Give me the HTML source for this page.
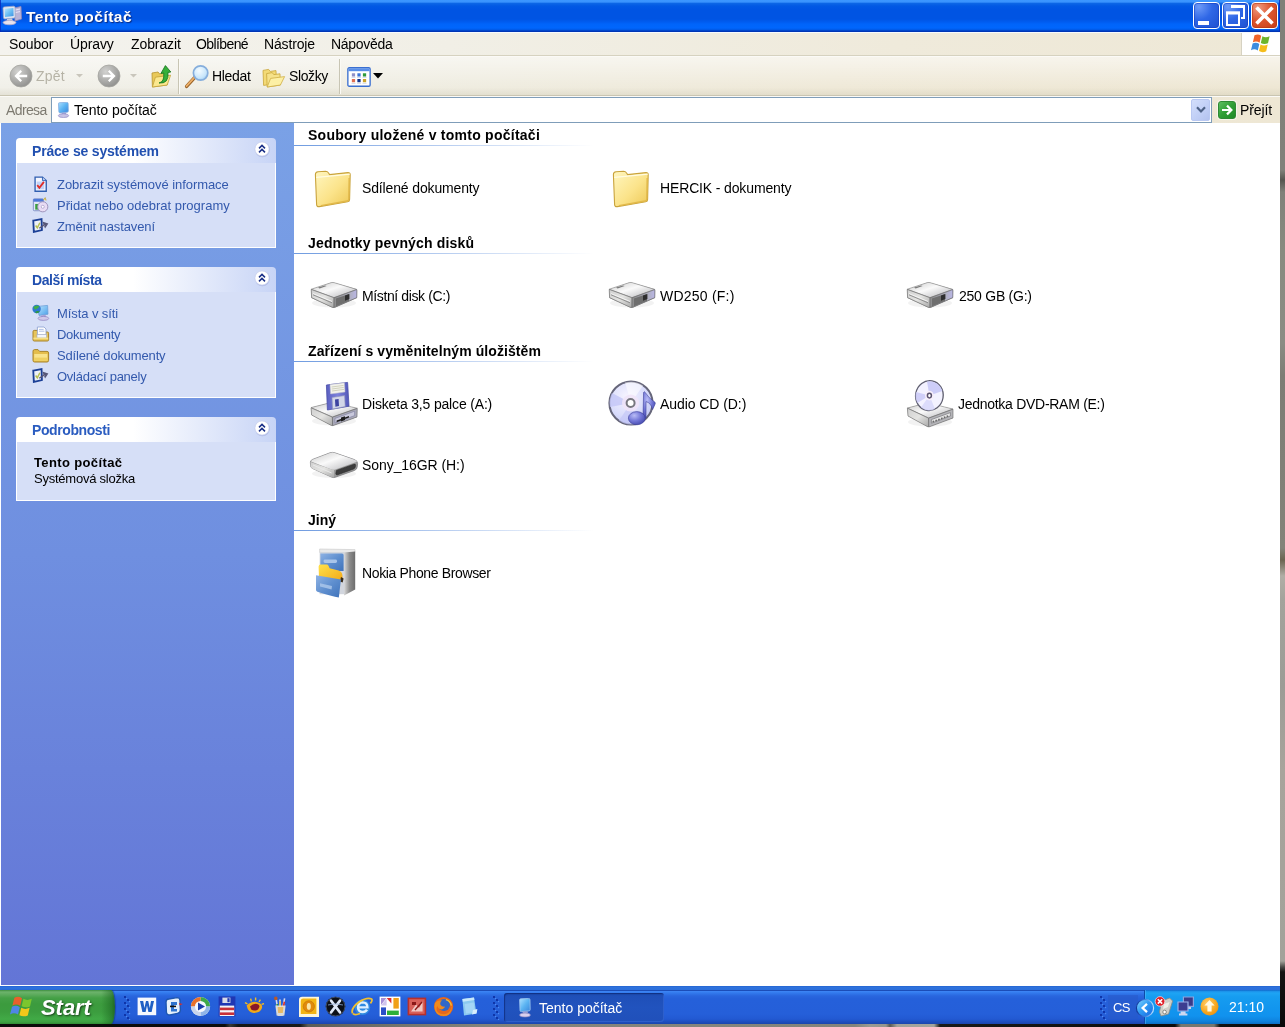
<!DOCTYPE html>
<html lang="cs">
<head>
<meta charset="utf-8">
<title>Tento počítač</title>
<style>
*{box-sizing:border-box;margin:0;padding:0}
html,body{width:1285px;height:1027px;overflow:hidden}
body{font-family:"Liberation Sans",sans-serif;font-size:13px;color:#000;background:#17150f;position:relative}
.abs{position:absolute}
.t{position:absolute;white-space:nowrap;line-height:1}
#screen{will-change:transform}
#rstrip{position:absolute;left:1280px;top:0;width:5px;height:1027px;background:linear-gradient(180deg,#7f8078 0,#80817a 170px,#55554f 180px,#80817a 192px,#888b80 250px,#8b8c84 343px,#7d7d75 376px,#838379 548px,#6a6450 560px,#b0aea6 576px,#a3a39c 600px,#9c9c96 686px,#a8a49c 770px,#a2a29a 961px,#4a4a46 967px,#141412 972px,#0a0a0a 1027px)}
#bstrip{position:absolute;left:0;top:1024px;width:1285px;height:3px;background:linear-gradient(90deg,#0b0b0a 0,#0d0d0b 225px,#3a3a36 230px,#161614 238px,#1a1a18 300px,#5c5c56 308px,#74746c 400px,#828279 480px,#85857c 700px,#84847b 855px,#9a9a92 870px,#95958d 886px,#5a5a54 890px,#a2a29a 897px,#a4a49c 934px,#1a1a18 940px,#0c0c0b 1175px,#77776f 1181px,#77776f 1214px,#111110 1220px,#0a0a0a 1285px)}
#screen{position:absolute;left:0;top:0;width:1280px;height:1024px;background:#fff;overflow:hidden}

/* title bar */
#title{position:absolute;left:0;top:0;width:1280px;height:32px;background:linear-gradient(180deg,#3c97ff 0,#3a93fd 2px,#0c66e6 3.5px,#0259e4 6px,#0054e3 10px,#0054e3 19px,#005cf0 22px,#0064fa 24px,#0066fd 28px,#005bea 29.5px,#0046cc 30.5px,#0035b5 31px,#0035b5 32px);box-shadow:inset 1px 0 0 rgba(8,40,190,.8),inset -1px 0 0 rgba(8,40,190,.8)}
#title .cap{left:26px;top:9px;font-size:15.5px;font-weight:bold;color:#fff;text-shadow:1px 1px 1px #0a2a80;letter-spacing:.5px}
.wb{position:absolute;top:2px;width:27px;height:27px;border:1px solid #fff;border-radius:4px;background:radial-gradient(circle at 20% 15%,#6d9af7 0,#2f67e6 45%,#1d50d0 100%);box-shadow:inset 0 0 0 1px rgba(20,60,190,.55)}
#bclose{background:radial-gradient(circle at 25% 20%,#ef9a80 0,#de5730 45%,#c53c16 100%);box-shadow:inset 0 0 0 1px rgba(170,50,20,.5)}
.wb svg{position:absolute;left:-1px;top:-1px}

/* menu */
#menu{position:absolute;left:0;top:32px;width:1280px;height:24px;background:linear-gradient(90deg,#f4f3ee 0,#f1efe6 35%,#efeadb 70%,#eee8d6 100%);border-top:1px solid #f6faff;border-bottom:1px solid #d6d2c0}
#menu .t{top:4px;font-size:14px}
#logo{position:absolute;left:1241px;top:0;width:39px;height:22px;background:#fff;border-left:1px solid #d6d2c2}
#tool{position:absolute;left:0;top:56px;width:1280px;height:40px;background:linear-gradient(180deg,rgba(255,255,255,.55) 0,rgba(255,255,255,.2) 50%,rgba(255,255,255,0) 80%,rgba(190,185,160,.25) 100%),linear-gradient(90deg,#f1f0e9 0,#efede2 30%,#efe9d8 65%,#eee7d4 100%);border-top:1px solid #fbfaf6;border-bottom:1px solid #c9c5b2}
#tool .t{font-size:14px;top:12px}
.sep{position:absolute;top:2px;width:2px;height:35px;border-left:1px solid #c8c5b4;border-right:1px solid #fbfaf5}
#addr{position:absolute;left:0;top:96px;width:1280px;height:27px;background:linear-gradient(90deg,#f1f0e9 0,#efede2 30%,#efe9d8 65%,#eee7d4 100%);border-top:1px solid #fbfaf6}
#addr .t{font-size:14px}
#abox{position:absolute;left:51px;top:0;width:1161px;height:26px;background:#fff;border:1px solid #7f9db9}
#adrop{position:absolute;left:1139px;top:1px;width:19px;height:22px;border-radius:2px;background:linear-gradient(135deg,#d3defa 0,#c3d1f7 50%,#b3c2ee 100%);border:1px solid #b9c8f2}
#go{position:absolute;left:1218px;top:4px;width:18px;height:18px;border-radius:3px;background:linear-gradient(135deg,#5fbf62 0,#2f9e35 50%,#1f8a28 100%);border:1px solid #2f8a35;box-shadow:0 0 0 1px rgba(255,255,255,.55)}

/* left pane */
#left{position:absolute;left:1px;top:123px;width:293px;height:862px;background:linear-gradient(180deg,#7aa1e6 0,#6f8fe0 50%,#6375d6 100%)}
.ph{position:absolute;left:15px;width:260px;height:25px;border-radius:4px 4px 0 0;background:linear-gradient(90deg,#fff 0,#fff 45%,#c7d4f6 100%)}
.ph .t{left:16px;top:6px;font-size:14px;font-weight:bold;color:#215dc6;letter-spacing:-.25px}
.chev{position:absolute;left:236px;top:1px}
.pb{position:absolute;left:15px;width:260px;background:#d6dff7;border:1px solid #fff;border-top:0}
.lnk{position:absolute;left:56px;font-size:13px;color:#3359ad;white-space:nowrap;line-height:1}
.ico{position:absolute;left:30px}

/* content */
#main{position:absolute;left:294px;top:123px;width:986px;height:863px;background:#fff}
.sh{position:absolute;left:14px;font-size:14px;font-weight:bold;white-space:nowrap;line-height:1}
.hl{position:absolute;left:0;width:300px;height:1px;background:linear-gradient(90deg,#6f9be0 0,#b7cdf0 50%,#fff 100%)}
.it{position:absolute;font-size:14px;white-space:nowrap;line-height:1}

/* taskbar */
#task{position:absolute;left:0;top:986px;width:1280px;height:38px;background:linear-gradient(180deg,#2260cc 0,#2d72dd 1px,#2c6fdb 3.5px,#1b4db8 4px,#1b4db8 5px,#3b83f3 5.5px,#3279ec 7px,#2966de 10px,#2560da 13px,#255fd9 28px,#2259d2 33px,#1d4dbd 36px,#1a45ad 38px)}
#start{position:absolute;left:0;top:4px;width:115px;height:34px;border-radius:0 4px 4px 0/0 17px 17px 0;background:linear-gradient(90deg,rgba(0,0,0,0) 0,rgba(0,0,0,0) 88%,rgba(20,90,25,.45) 97%,rgba(15,70,20,.6) 100%),linear-gradient(180deg,#3f8f3f 0,#6db36c 2px,#5aaa5a 5px,#44a046 8px,#3c9b3e 14px,#3c9d3f 22px,#41aa46 29px,#3da142 32px,#2f8a34 34px);box-shadow:1px 0 1px rgba(10,40,120,.45)}
#start .t{left:41px;top:7px;font-size:22px;font-weight:bold;font-style:italic;color:#fff;letter-spacing:-.05px;text-shadow:1px 1px 2px rgba(20,50,20,.85)}
.grip{position:absolute;top:10px;width:7px;height:24px}
.ql{position:absolute;top:10px}
#tbtn{position:absolute;left:504px;top:7px;width:160px;height:29px;border-radius:3px;background:linear-gradient(180deg,#1a47a8 0,#1f4fb8 3px,#2153be 50%,#2050ba 100%);box-shadow:inset 1px 1px 1px rgba(10,30,100,.6),inset -1px -1px 0 rgba(60,110,220,.5)}
#tbtn .t{left:35px;top:8px;font-size:14px;color:#fff}
#tray{position:absolute;left:1144px;top:4px;width:136px;height:34px;background:linear-gradient(180deg,#0e5fc4 0,#1b8ee8 1px,#1ea4f4 3px,#169cf0 7px,#1296ee 18px,#1192ee 26px,#0f83de 31px,#0c6fc4 34px);border-left:1px solid #0d4aa8;box-shadow:inset 1px 0 0 rgba(90,190,255,.5)}
#task .w{position:absolute;font-size:14px;color:#fff;white-space:nowrap;line-height:1}
</style>
</head>
<body>
<div id="screen">
  <div id="title">
    <svg class="abs" style="left:1px;top:5px" width="22" height="21" viewBox="0 0 22 21">
      <defs><linearGradient id="scr" x1="0" y1="0" x2="1" y2="1"><stop offset="0" stop-color="#bfe6ff"/><stop offset=".5" stop-color="#6cc0f5"/><stop offset="1" stop-color="#3d8fe0"/></linearGradient></defs>
      <path d="M13 3 L20 1.5 L20.5 14 L14 16 Z" fill="#b9b4d8" stroke="#8e88b8" stroke-width=".8"/>
      <path d="M14.5 5 L19 4 M14.5 7.5 L19 6.6" stroke="#e8e4f6" stroke-width="1"/>
      <path d="M2 3.2 Q2 2 3.2 1.9 L12.6 1.2 Q14 1.2 14 2.6 L14.2 11.6 Q14.2 13 13 13.1 L4 14 Q2.6 14 2.5 12.8 Z" fill="#dfe6f4" stroke="#9aa6c8" stroke-width=".8"/>
      <path d="M3.6 3.8 L12.4 3 L12.6 11 L4 11.9 Z" fill="url(#scr)"/>
      <path d="M6 14 L11 13.5 L12 16 L5.5 16.6 Z" fill="#c9cde0"/>
      <ellipse cx="8.5" cy="17.6" rx="6.5" ry="2.2" fill="#e6e2ee" stroke="#a9a3c4" stroke-width=".7"/>
    </svg>
    <span class="t cap">Tento počítač</span>
    <div class="wb" id="bmin" style="left:1193px"><svg width="27" height="27"><rect x="5" y="19" width="11" height="4" fill="#fff"/></svg></div>
    <div class="wb" id="bmax" style="left:1222px"><svg width="27" height="27"><path d="M10 4.5 H22 V16 H19" fill="none" stroke="#fff" stroke-width="2"/><rect x="9" y="3" width="14" height="3" fill="#fff"/><rect x="5" y="11" width="12" height="12" fill="none" stroke="#fff" stroke-width="2"/><rect x="4" y="9.3" width="14" height="3.2" fill="#fff"/></svg></div>
    <div class="wb" id="bclose" style="left:1251px"><svg width="27" height="27"><path d="M5.5 5.5 L21.5 21.5 M21.5 5.5 L5.5 21.5" stroke="#fff" stroke-width="3.6" stroke-linecap="butt"/></svg></div>
  </div>
  <div id="menu">
    <span class="t" style="left:9px;letter-spacing:-.15px">Soubor</span>
    <span class="t" style="left:70px;letter-spacing:-.1px">Úpravy</span>
    <span class="t" style="left:131px;letter-spacing:-.1px">Zobrazit</span>
    <span class="t" style="left:196px;letter-spacing:-.6px">Oblíbené</span>
    <span class="t" style="left:264px;letter-spacing:-.15px">Nástroje</span>
    <span class="t" style="left:331px;letter-spacing:-.3px">Nápověda</span>
    <div id="logo">
      <svg class="abs" style="left:9px;top:0" width="22" height="21" viewBox="0 0 22 20" preserveAspectRatio="none">
        <path d="M3.5 2.2 Q7 .4 10.2 2.6 L8.6 9.2 Q5.4 7.2 1.9 8.8 Z" fill="#f0642a"/>
        <path d="M11.4 3.2 Q14.6 5 18.6 3.2 L17 9.8 Q13.2 11.4 9.8 9.6 Z" fill="#6cb52d"/>
        <path d="M1.6 10 Q5 8.2 8.3 10.4 L6.8 16.6 Q3.4 14.6 0 16.4 Z" fill="#3a8be0"/>
        <path d="M9.5 10.9 Q12.8 12.8 16.7 11 L15.2 17.4 Q11.4 19.2 8 17.2 Z" fill="#f5bd1b"/>
      </svg>
    </div>
  </div>
  <div id="tool">
    <svg class="abs" style="left:9px;top:7px" width="24" height="24" viewBox="0 0 24 24">
      <defs><radialGradient id="gb" cx=".35" cy=".3" r=".8"><stop offset="0" stop-color="#d2d2d0"/><stop offset=".6" stop-color="#a8a8a6"/><stop offset="1" stop-color="#8b8b89"/></radialGradient></defs>
      <circle cx="12" cy="12" r="11" fill="url(#gb)" stroke="#a4a4a0" stroke-width=".8"/>
      <path d="M5.4 12 L11.4 6 L13 7.6 L10 10.8 H18.2 V13.2 H10 L13 16.4 L11.4 18 Z" fill="#fff"/>
    </svg>
    <span class="t" style="left:36px;color:#b6b3a6;letter-spacing:.2px">Zpět</span>
    <svg class="abs" style="left:76px;top:17px" width="7" height="4"><path d="M0 0 H7 L3.5 3.6 Z" fill="#c9c6bc"/></svg>
    <svg class="abs" style="left:97px;top:7px" width="24" height="24" viewBox="0 0 24 24">
      <circle cx="12" cy="12" r="11" fill="url(#gb)" stroke="#a4a4a0" stroke-width=".8"/>
      <path d="M18.6 12 L12.6 6 L11 7.6 L14 10.8 H5.8 V13.2 H14 L11 16.4 L12.6 18 Z" fill="#fff"/>
    </svg>
    <svg class="abs" style="left:130px;top:17px" width="7" height="4"><path d="M0 0 H7 L3.5 3.6 Z" fill="#c9c6bc"/></svg>
    <svg class="abs" style="left:150px;top:6px" width="22" height="25" viewBox="0 0 22 25">
      <path d="M2 10 L8 9 L9.5 10.8 L17 9.8 L17.2 22 L2.4 24 Z" fill="#e9c95a" stroke="#b5932e" stroke-width=".8"/>
      <path d="M2.4 24 L5.4 14.2 L20.6 12.2 L17.2 22 Z" fill="#fbe88f" stroke="#c3a23a" stroke-width=".8"/>
      <path d="M9 20 Q14.5 19 13.8 10 L11 10.4 L15.4 2.6 L20.8 9 L18 9.4 Q19 21 9 20 Z" fill="#37b03a" stroke="#1d7a22" stroke-width=".9"/>
    </svg>
    <div class="sep" style="left:178px"></div>
    <svg class="abs" style="left:183px;top:7px" width="28" height="26" viewBox="0 0 28 26">
      <defs><radialGradient id="lens" cx=".4" cy=".35" r=".7"><stop offset="0" stop-color="#f4fbff"/><stop offset=".7" stop-color="#c9e6fb"/><stop offset="1" stop-color="#9ccbf2"/></radialGradient></defs>
      <path d="M3.6 22.4 L11.6 13.6" stroke="#9a6428" stroke-width="3.4" stroke-linecap="round"/>
      <path d="M3.6 22 L11 13.8" stroke="#eeb06a" stroke-width="1.8" stroke-linecap="round"/>
      <circle cx="17.6" cy="9" r="7.2" fill="url(#lens)" stroke="#86aedc" stroke-width="1.7"/>
    </svg>
    <span class="t" style="left:212px;letter-spacing:-.31px">Hledat</span>
    <svg class="abs" style="left:262px;top:10px" width="24" height="22" viewBox="0 0 24 22">
      <path d="M1 3.4 L6.6 2.4 L8.2 4.4 L14 3.6 L14.6 16.6 L1.6 18.4 Z" fill="#f3da76" stroke="#c9a63a" stroke-width=".8"/>
      <path d="M4.6 6.6 L10.2 5.6 L11.8 7.6 L18 6.8 L18.4 18 L5.2 20 Z" fill="#f6e28a" stroke="#c9a63a" stroke-width=".8"/>
      <path d="M5.2 20 L8.6 11.4 L22.6 9.6 L18.4 18 Z" fill="#fdf0a5" stroke="#cfae45" stroke-width=".8"/>
    </svg>
    <span class="t" style="left:289px;letter-spacing:-.39px">Složky</span>
    <div class="sep" style="left:339px"></div>
    <svg class="abs" style="left:346.5px;top:9.5px" width="24" height="20" viewBox="0 0 25 21">
      <rect x=".8" y=".8" width="23.4" height="19.4" rx="1.4" fill="#fff" stroke="#3a6fd0" stroke-width="1.4"/>
      <rect x="1.4" y="1.4" width="22.2" height="3" fill="#5a8fe8"/>
      <rect x="5" y="6.6" width="3.4" height="3.4" fill="#8f90c8"/><rect x="10.8" y="6.6" width="3.4" height="3.4" fill="#3b74d8"/><rect x="16.6" y="6.6" width="3.4" height="3.4" fill="#2e9a3c"/>
      <rect x="5" y="12.6" width="3.4" height="3.4" fill="#e07052"/><rect x="10.8" y="12.6" width="3.4" height="3.4" fill="#14348c"/><rect x="16.6" y="12.6" width="3.4" height="3.4" fill="#c9a22a"/>
      <path d="M4.6 11 H8.8 M10.4 11 H14.6 M16.2 11 H20.4 M4.6 17.2 H8.8 M10.4 17.2 H14.6 M16.2 17.2 H20.4" stroke="#c9cfe0" stroke-width=".8"/>
    </svg>
    <svg class="abs" style="left:373px;top:16px" width="10" height="6"><path d="M0 0 H10 L5 5.4 Z" fill="#000"/></svg>
  </div>
  <div id="addr">
    <span class="t" style="left:6px;top:6px;color:#7d7a70;letter-spacing:-.62px">Adresa</span>
    <div id="abox">
      <svg class="abs" style="left:5px;top:4px" width="13" height="16" viewBox="0 0 14 17">
        <defs><linearGradient id="scr2" x1="0" y1="0" x2="1" y2="1"><stop offset="0" stop-color="#aee0ff"/><stop offset=".5" stop-color="#5bb4f2"/><stop offset="1" stop-color="#3a86dc"/></linearGradient></defs>
        <path d="M1.6 1.6 Q1.6 .6 2.8 .6 L10.6 .3 Q12 .3 12 1.6 L12.2 9.6 Q12.2 10.8 11 10.9 L3.4 11.6 Q2 11.6 2 10.4 Z" fill="url(#scr2)" stroke="#7fa8dd" stroke-width=".8"/>
        <path d="M5 11.6 L9.6 11.2 L10 13.4 L5 13.8 Z" fill="#9aa6d8"/>
        <ellipse cx="7" cy="14.6" rx="5.6" ry="2" fill="#c7c3e6" stroke="#8d86c2" stroke-width=".7"/>
      </svg>
      <span class="t" style="left:22px;top:5px;letter-spacing:-.04px">Tento počítač</span>
      <div id="adrop"><svg class="abs" style="left:4px;top:6px" width="10" height="8"><path d="M1 1.2 L5 5.4 L9 1.2" fill="none" stroke="#4d6185" stroke-width="2.2"/></svg></div>
    </div>
    <div id="go"><svg class="abs" style="left:0;top:0" width="16" height="16"><path d="M3 8 H12 M8 3.6 L12.4 8 L8 12.4" fill="none" stroke="#fff" stroke-width="2.2"/></svg></div>
    <span class="t" style="left:1240px;top:6px;letter-spacing:-.12px">Přejít</span>
  </div>
  <div id="left">
    <div class="ph" style="top:15px"><span class="t" style="letter-spacing:-.19px;color:#2150b0">Práce se systémem</span><svg class="chev" width="20" height="20" viewBox="0 0 20 20"><circle cx="10.4" cy="10.6" r="7.6" fill="rgba(130,140,200,.35)"/><circle cx="10" cy="10" r="7.1" fill="#fff" stroke="#c9d0ee" stroke-width=".7"/><path d="M7 9.4 L10 6.4 L13 9.4 M7 13.4 L10 10.4 L13 13.4" fill="none" stroke="#1b3088" stroke-width="1.5"/></svg></div>
    <div class="pb" style="top:40px;height:85px">
      <svg class="ico" style="left:17px;top:13px" width="13.5" height="16.5" viewBox="0 0 15 18"><path d="M1.2 1 H9.4 L13.6 5 V16.8 H1.2 Z" fill="#f4f6ff" stroke="#2f5eb0" stroke-width="1.5"/><path d="M9.4 1 V5 H13.6" fill="#b9cdf2" stroke="#2f5eb0" stroke-width="1"/><rect x="3" y="6" width="8.4" height="8.6" fill="#c2d2f6"/><path d="M3.6 10 L6 13 L11 6.4" fill="none" stroke="#e02c28" stroke-width="2"/></svg>
      <svg class="ico" style="left:15px;top:34px" width="17" height="16" viewBox="0 0 18 17"><rect x="1.4" y="2" width="10.6" height="12.6" rx="1" fill="#dfe6f7" stroke="#7e8fc4" stroke-width="1"/><rect x="1.4" y="2" width="10.6" height="3" fill="#4d79d8"/><rect x="3.4" y="7.4" width="3" height="6" fill="#3aa03c"/><circle cx="11.4" cy="10.4" r="5.4" fill="#e8dcf4" stroke="#9a90b8" stroke-width="1"/><circle cx="11.4" cy="10.4" r="1.6" fill="#fff" stroke="#a79cc8" stroke-width=".8"/><path d="M12 3 L14 .6 L15 3.6" fill="#f0d860" stroke="#a89030" stroke-width=".6"/></svg>
      <svg class="ico"  style="left:15px;top:55px" width="16.5" height="15" viewBox="0 0 18 16"><path d="M1.4 2.6 L10.4 1 L10.8 13 L2 15 Z" fill="#eef1f8" stroke="#1b3f96" stroke-width="2"/><path d="M4 8 L5.8 10.6 L8.6 5" fill="none" stroke="#b8c050" stroke-width="1.6"/><path d="M8 11 L14.4 6.6 M12.6 5 L16.6 6.2 L14.4 9.6 Z" stroke="#585878" stroke-width="1.6" fill="#585878"/></svg>
      <span class="lnk" style="left:40px;top:15px;letter-spacing:-0.06px">Zobrazit systémové informace</span>
      <span class="lnk" style="left:40px;top:36px;letter-spacing:0px">Přidat nebo odebrat programy</span>
      <span class="lnk" style="left:40px;top:57px;letter-spacing:-0.11px">Změnit nastavení</span>
    </div>
    <div class="ph" style="top:144px"><span class="t" style="letter-spacing:-.4px;color:#2150b0">Další místa</span><svg class="chev" width="20" height="20" viewBox="0 0 20 20"><circle cx="10.4" cy="10.6" r="7.6" fill="rgba(130,140,200,.35)"/><circle cx="10" cy="10" r="7.1" fill="#fff" stroke="#c9d0ee" stroke-width=".7"/><path d="M7 9.4 L10 6.4 L13 9.4 M7 13.4 L10 10.4 L13 13.4" fill="none" stroke="#1b3088" stroke-width="1.5"/></svg></div>
    <div class="pb" style="top:169px;height:106px">
      <svg class="ico" style="left:15px;top:12px" width="18" height="17" viewBox="0 0 18 17"><defs><linearGradient id="mon" x1="0" y1="0" x2="1" y2="1"><stop offset="0" stop-color="#b8e4ff"/><stop offset="1" stop-color="#4a9fe8"/></linearGradient></defs><path d="M6 2.4 L15.6 1.4 L16 10.2 L7 11.4 Z" fill="url(#mon)" stroke="#6d9fd8" stroke-width=".8"/><path d="M9 11.4 L13.6 10.8 L14 13 L9 13.6 Z" fill="#a7a2d8"/><ellipse cx="11.4" cy="14.4" rx="5.4" ry="2" fill="#cfc8ea" stroke="#8c84c0" stroke-width=".7"/><circle cx="4.6" cy="5" r="4.2" fill="#2f78d0"/><path d="M1.4 3 Q4 .4 7.4 2 Q6.4 5 3.6 5.4 Q2 5.6 1.4 3 Z" fill="#3fae48"/><path d="M3 8 Q5 6.4 7.8 7.4 Q6.4 9.4 4.2 9.2 Z" fill="#2f9a40"/></svg>
      <svg class="ico" style="left:15px;top:34px" width="18" height="16" viewBox="0 0 18 16"><path d="M1 5.6 Q1 4.4 2.2 4.4 H6 L7.4 6 H15.4 Q16.6 6 16.6 7.2 V13.8 Q16.6 15 15.4 15 H2.2 Q1 15 1 13.8 Z" fill="#e8c55a" stroke="#a8842a" stroke-width="1"/><path d="M5.4 1 H12 L14 3 V9 H5.4 Z" fill="#fff" stroke="#8aa0d0" stroke-width=".8"/><path d="M7 3.4 H11.6 M7 5.2 H12.4" stroke="#9fb4e0" stroke-width=".8"/><rect x="5" y="8.4" width="9.6" height="3.6" fill="#f3f5fb" stroke="#9fa8c0" stroke-width=".6"/><path d="M1.4 12.4 H16.2" stroke="#f6e08a" stroke-width="1.6"/></svg>
      <svg class="ico" style="left:15px;top:56px" width="18" height="15" viewBox="0 0 18 15"><path d="M1 3.2 Q1 1.6 2.6 1.6 H6 L7.6 3.4 H15 Q16.6 3.4 16.6 5 V12.4 Q16.6 14 15 14 H2.6 Q1 14 1 12.4 Z" fill="#e4bd4c" stroke="#a8842a" stroke-width="1"/><path d="M2.2 6 H15.4 V12.6 H2.2 Z" fill="#f8e38c"/><path d="M2.2 9.6 H15.4 V12.6 H2.2 Z" fill="#efd060"/></svg>
      <svg class="ico" style="left:15px;top:76px" width="16.5" height="15" viewBox="0 0 18 16"><path d="M1.4 2.6 L10.4 1 L10.8 13 L2 15 Z" fill="#eef1f8" stroke="#1b3f96" stroke-width="2"/><path d="M4 8 L5.8 10.6 L8.6 5" fill="none" stroke="#b8c050" stroke-width="1.6"/><path d="M8 11 L14.4 6.6 M12.6 5 L16.6 6.2 L14.4 9.6 Z" stroke="#585878" stroke-width="1.6" fill="#585878"/></svg>
      <span class="lnk" style="left:40px;top:15px;letter-spacing:-0.08px">Místa v síti</span>
      <span class="lnk" style="left:40px;top:36px;letter-spacing:-0.27px">Dokumenty</span>
      <span class="lnk" style="left:40px;top:57px;letter-spacing:-0.17px">Sdílené dokumenty</span>
      <span class="lnk" style="left:40px;top:78px;letter-spacing:-0.25px">Ovládací panely</span>
    </div>
    <div class="ph" style="top:294px"><span class="t" style="letter-spacing:-.41px;color:#2a5cc0">Podrobnosti</span><svg class="chev" width="20" height="20" viewBox="0 0 20 20"><circle cx="10.4" cy="10.6" r="7.6" fill="rgba(130,140,200,.35)"/><circle cx="10" cy="10" r="7.1" fill="#fff" stroke="#c9d0ee" stroke-width=".7"/><path d="M7 9.4 L10 6.4 L13 9.4 M7 13.4 L10 10.4 L13 13.4" fill="none" stroke="#1b3088" stroke-width="1.5"/></svg></div>
    <div class="pb" style="top:319px;height:59px">
      <span class="lnk" style="left:17px;top:14px;color:#000;font-weight:bold;letter-spacing:.37px">Tento počítač</span>
      <span class="lnk" style="left:17px;top:30px;color:#000;letter-spacing:-.24px">Systémová složka</span>
    </div>
  </div>
  <div id="main"><svg width="0" height="0" style="position:absolute"><defs>
<linearGradient id="fold1" x1="0" y1="0" x2="1" y2="1"><stop offset="0" stop-color="#fff6c0"/><stop offset=".55" stop-color="#fbe38a"/><stop offset="1" stop-color="#edc856"/></linearGradient>
<linearGradient id="hdtop" x1="0" y1="0" x2="1" y2="1"><stop offset="0" stop-color="#c9c9c9"/><stop offset=".45" stop-color="#fafafa"/><stop offset="1" stop-color="#b4b4b8"/></linearGradient>
<linearGradient id="hdl" x1="0" y1="0" x2="1" y2="1"><stop offset="0" stop-color="#cfcfcf"/><stop offset=".5" stop-color="#e4e4e2"/><stop offset="1" stop-color="#a8a8a8"/></linearGradient>
<linearGradient id="hdr" x1="0" y1="0" x2="1" y2="0"><stop offset="0" stop-color="#8a8a8a"/><stop offset=".7" stop-color="#b0b0c0"/><stop offset="1" stop-color="#b9b6e6"/></linearGradient>
<radialGradient id="cdg" cx=".4" cy=".35" r=".75"><stop offset="0" stop-color="#f6f4ff"/><stop offset=".6" stop-color="#d9dcfb"/><stop offset="1" stop-color="#bcc2f2"/></radialGradient>
<radialGradient id="noteg" cx=".35" cy=".3" r=".8"><stop offset="0" stop-color="#b9bcf6"/><stop offset=".5" stop-color="#7478d8"/><stop offset="1" stop-color="#3f44a8"/></radialGradient>
<linearGradient id="flp" x1="0" y1="0" x2="1" y2="0"><stop offset="0" stop-color="#5a5fc0"/><stop offset=".5" stop-color="#7d82dc"/><stop offset="1" stop-color="#5358b8"/></linearGradient>
<linearGradient id="cabside" x1="0" y1="0" x2="1" y2="0"><stop offset="0" stop-color="#d9d9d9"/><stop offset=".5" stop-color="#8c8c8c"/><stop offset="1" stop-color="#6c6c6c"/></linearGradient>
<linearGradient id="drw" x1="0" y1="0" x2="1" y2="1"><stop offset="0" stop-color="#8fb3e4"/><stop offset=".5" stop-color="#5f8fcf"/><stop offset="1" stop-color="#3f73bb"/></linearGradient>
<linearGradient id="yfold" x1="0" y1="0" x2="1" y2="1"><stop offset="0" stop-color="#ffe14a"/><stop offset="1" stop-color="#f2a818"/></linearGradient>
</defs></svg>
<span class="sh" style="top:5px;letter-spacing:0.25px">Soubory uložené v tomto počítači</span><div class="hl" style="top:22px"></div>
<svg class="abs" style="left:19px;top:45px" width="40" height="40" viewBox="0 0 40 40"><path d="M2.4 6.6 Q2.4 4 5 3.8 L12.6 3.2 Q14.4 3.2 15.4 4.8 L16.6 6.6 L35 4.6 Q37.2 4.6 37.2 6.8 L36.6 31.4 Q36.6 33.4 34.6 33.8 L6.4 38.6 Q3.6 39 3.6 36.4 Z" fill="url(#fold1)" stroke="#c9a33c" stroke-width="1.1"/><path d="M3.2 9.4 L16.8 8.2 L36.8 6.2" fill="none" stroke="#fffbe2" stroke-width="1.2"/><path d="M36.2 10 L35.8 31 Q35.8 32.8 34 33 L8 37.6" fill="none" stroke="#e2b94a" stroke-width="1.4"/></svg><span class="it" style="left:68px;top:58px;letter-spacing:-0.14px">Sdílené dokumenty</span>
<svg class="abs" style="left:317px;top:45px" width="40" height="40" viewBox="0 0 40 40"><path d="M2.4 6.6 Q2.4 4 5 3.8 L12.6 3.2 Q14.4 3.2 15.4 4.8 L16.6 6.6 L35 4.6 Q37.2 4.6 37.2 6.8 L36.6 31.4 Q36.6 33.4 34.6 33.8 L6.4 38.6 Q3.6 39 3.6 36.4 Z" fill="url(#fold1)" stroke="#c9a33c" stroke-width="1.1"/><path d="M3.2 9.4 L16.8 8.2 L36.8 6.2" fill="none" stroke="#fffbe2" stroke-width="1.2"/><path d="M36.2 10 L35.8 31 Q35.8 32.8 34 33 L8 37.6" fill="none" stroke="#e2b94a" stroke-width="1.4"/></svg><span class="it" style="left:366px;top:58px;letter-spacing:-0.14px">HERCIK - dokumenty</span>
<span class="sh" style="top:113px;letter-spacing:0.16px">Jednotky pevných disků</span><div class="hl" style="top:130px"></div>
<svg class="abs" style="left:15px;top:158px" width="50" height="28" viewBox="0 0 50 28"><ellipse cx="25" cy="22" rx="22" ry="4.5" fill="rgba(0,0,0,.05)"/><path d="M2 8.4 L22.4 1.6 Q24 1.2 25.6 1.8 L47.4 8 Q48.2 8.6 48.2 9.4 L48 17 L26 26.6 Q24.6 27 23.2 26.4 L2.4 17 Z" fill="#8e8e8e"/><path d="M2.2 8.2 L22.4 1.6 Q24 1.2 25.6 1.8 L47.6 8.4 L25 16.6 Z" fill="url(#hdtop)" stroke="#8a8a8a" stroke-width=".6"/><path d="M2.2 8.4 L25 16.8 L25 26.4 Q24 26.6 23 26.2 L2.6 16.6 Z" fill="url(#hdl)" stroke="#6f6f6f" stroke-width=".6"/><path d="M25 16.8 L47.8 8.6 L47.8 16.6 L26.6 26 Q25.6 26.4 25 26.2 Z" fill="url(#hdr)" stroke="#6a6a6a" stroke-width=".6"/><path d="M27 17.6 L40 13 L40 20 L27 25.2 Z" fill="#6e6e6e"/><path d="M36 14.6 L40.4 13 L40.4 18 L36 19.8 Z" fill="#2e2e2e"/><path d="M4 12.6 L23 20.4" stroke="#f4f4f4" stroke-width="1"/><path d="M4 13.8 L23 21.8" stroke="#7c7c7c" stroke-width=".8"/><path d="M9 6.6 L16 4.4 L17.6 5 L10.6 7.4 Z" fill="#7a7a7a"/></svg><span class="it" style="left:68px;top:166px;letter-spacing:-0.38px">Místní disk (C:)</span>
<svg class="abs" style="left:313px;top:158px" width="50" height="28" viewBox="0 0 50 28"><ellipse cx="25" cy="22" rx="22" ry="4.5" fill="rgba(0,0,0,.05)"/><path d="M2 8.4 L22.4 1.6 Q24 1.2 25.6 1.8 L47.4 8 Q48.2 8.6 48.2 9.4 L48 17 L26 26.6 Q24.6 27 23.2 26.4 L2.4 17 Z" fill="#8e8e8e"/><path d="M2.2 8.2 L22.4 1.6 Q24 1.2 25.6 1.8 L47.6 8.4 L25 16.6 Z" fill="url(#hdtop)" stroke="#8a8a8a" stroke-width=".6"/><path d="M2.2 8.4 L25 16.8 L25 26.4 Q24 26.6 23 26.2 L2.6 16.6 Z" fill="url(#hdl)" stroke="#6f6f6f" stroke-width=".6"/><path d="M25 16.8 L47.8 8.6 L47.8 16.6 L26.6 26 Q25.6 26.4 25 26.2 Z" fill="url(#hdr)" stroke="#6a6a6a" stroke-width=".6"/><path d="M27 17.6 L40 13 L40 20 L27 25.2 Z" fill="#6e6e6e"/><path d="M36 14.6 L40.4 13 L40.4 18 L36 19.8 Z" fill="#2e2e2e"/><path d="M4 12.6 L23 20.4" stroke="#f4f4f4" stroke-width="1"/><path d="M4 13.8 L23 21.8" stroke="#7c7c7c" stroke-width=".8"/><path d="M9 6.6 L16 4.4 L17.6 5 L10.6 7.4 Z" fill="#7a7a7a"/></svg><span class="it" style="left:366px;top:166px;letter-spacing:0.22px">WD250 (F:)</span>
<svg class="abs" style="left:611px;top:158px" width="50" height="28" viewBox="0 0 50 28"><ellipse cx="25" cy="22" rx="22" ry="4.5" fill="rgba(0,0,0,.05)"/><path d="M2 8.4 L22.4 1.6 Q24 1.2 25.6 1.8 L47.4 8 Q48.2 8.6 48.2 9.4 L48 17 L26 26.6 Q24.6 27 23.2 26.4 L2.4 17 Z" fill="#8e8e8e"/><path d="M2.2 8.2 L22.4 1.6 Q24 1.2 25.6 1.8 L47.6 8.4 L25 16.6 Z" fill="url(#hdtop)" stroke="#8a8a8a" stroke-width=".6"/><path d="M2.2 8.4 L25 16.8 L25 26.4 Q24 26.6 23 26.2 L2.6 16.6 Z" fill="url(#hdl)" stroke="#6f6f6f" stroke-width=".6"/><path d="M25 16.8 L47.8 8.6 L47.8 16.6 L26.6 26 Q25.6 26.4 25 26.2 Z" fill="url(#hdr)" stroke="#6a6a6a" stroke-width=".6"/><path d="M27 17.6 L40 13 L40 20 L27 25.2 Z" fill="#6e6e6e"/><path d="M36 14.6 L40.4 13 L40.4 18 L36 19.8 Z" fill="#2e2e2e"/><path d="M4 12.6 L23 20.4" stroke="#f4f4f4" stroke-width="1"/><path d="M4 13.8 L23 21.8" stroke="#7c7c7c" stroke-width=".8"/><path d="M9 6.6 L16 4.4 L17.6 5 L10.6 7.4 Z" fill="#7a7a7a"/></svg><span class="it" style="left:665px;top:166px;letter-spacing:-0.25px">250 GB (G:)</span>
<span class="sh" style="top:221px;letter-spacing:0.08px">Zařízení s vyměnitelným úložištěm</span><div class="hl" style="top:238px"></div>
<svg class="abs" style="left:15px;top:257px" width="50" height="47" viewBox="0 0 50 47"><ellipse cx="25" cy="41" rx="22" ry="4.5" fill="rgba(0,0,0,.05)"/>
<path d="M2 27.6 L22 22.6 L48.2 28.2 L48 37 L24 45.4 Q23 45.8 22 45.2 L2.6 35 Z" fill="#8e8e8e"/>
<path d="M2 27.6 L22.6 22.4 L48.2 28.2 L23.4 37 Z" fill="url(#hdtop)" stroke="#8a8a8a" stroke-width=".6"/>
<path d="M2 27.8 L23.4 37.2 L23.6 45.6 Q22.6 45.6 21.8 45.2 L2.6 35 Z" fill="url(#hdl)" stroke="#6f6f6f" stroke-width=".6"/>
<path d="M23.4 37.2 L48.2 28.4 L48 37 L24.6 45.4 Q24 45.6 23.6 45.6 Z" fill="#a9a9b8" stroke="#6a6a6a" stroke-width=".6"/>
<path d="M26 38.4 L45.6 31.2 L45.6 35.6 L26 43 Z" fill="#c9c9dc" stroke="#7f7fa0" stroke-width=".6"/>
<path d="M27.6 40.6 L40 36 L40 37.6 L27.6 42.2 Z" fill="#1c1c1c"/><path d="M32 37.6 L36 36.2 L36 40 L32 41.4 Z" fill="#1c1c1c"/>
<path d="M17.4 5 L38.6 2.4 L40 26.2 L18.4 30 Z" fill="url(#flp)" stroke="#4a4fa8" stroke-width=".8"/>
<path d="M21 4.6 L35.4 2.8 L36 12 L21.6 14 Z" fill="#f2f2ec" stroke="#b9b9c6" stroke-width=".5"/>
<path d="M22.6 7 L34.6 5.4 M22.8 9 L34.8 7.4 M23 11 L35 9.4" stroke="#c9c9b0" stroke-width=".8"/>
<path d="M23 17.4 L35.6 15.6 L36.2 26.6 L23.6 29 Z" fill="#d2d6e8" stroke="#8e92b8" stroke-width=".6"/>
<path d="M26 19.6 L29.6 19 L30 26 L26.4 26.8 Z" fill="#3d42a0"/>
</svg><span class="it" style="left:68px;top:274px;letter-spacing:-0.17px">Disketa 3,5 palce (A:)</span>
<svg class="abs" style="left:313px;top:256px" width="50" height="48" viewBox="0 0 50 48"><circle cx="24" cy="24" r="21.6" fill="url(#cdg)" stroke="#66667a" stroke-width="2"/>
<path d="M24 24 L5 14 A21.4 21.4 0 0 0 3 28 Z" fill="#c3c6f6" opacity=".8"/><path d="M24 24 L18 3.6 A21.4 21.4 0 0 1 36 6.6 Z" fill="#fff" opacity=".55"/><path d="M24 24 L30 44.6 A21.4 21.4 0 0 1 12 41.6 Z" fill="#c3c6f6" opacity=".7"/>
<circle cx="23.6" cy="24" r="8.6" fill="#f0e4f8" opacity=".9"/><circle cx="23.6" cy="24" r="4" fill="#fff" stroke="#77777f" stroke-width="2"/>
<path d="M36.6 13.4 Q37.2 12 38.2 13.4 Q41.4 19 47.8 23 Q48.8 24 47.8 25.8 L45.6 30.6 Q44 23.8 39 22.6 L39 39 L36 39.6 Z" fill="url(#noteg)" stroke="#3a3e98" stroke-width=".6"/>
<ellipse cx="29.8" cy="39.2" rx="8.4" ry="6.6" fill="url(#noteg)" stroke="#3a3e98" stroke-width=".6"/></svg><span class="it" style="left:366px;top:274px;letter-spacing:-0.07px">Audio CD (D:)</span>
<svg class="abs" style="left:611px;top:255px" width="50" height="50" viewBox="0 0 50 50"><ellipse cx="25" cy="44" rx="22" ry="4.5" fill="rgba(0,0,0,.05)"/>
<path d="M2.4 30 L22 25 L48 31 L48 40 L24.6 48.6 Q23.4 49 22.4 48.4 L3 38 Z" fill="#8e8e8e"/>
<path d="M2.4 30 L22.4 24.8 L48 31 L23.6 40 Z" fill="url(#hdtop)" stroke="#8a8a8a" stroke-width=".6"/>
<path d="M2.4 30.2 L23.6 40.2 L23.8 48.8 Q22.8 48.8 22 48.4 L3 38 Z" fill="url(#hdl)" stroke="#6f6f6f" stroke-width=".6"/>
<path d="M23.6 40.2 L48 31.2 L48 40 L25 48.6 Q24.4 48.8 23.8 48.8 Z" fill="#b4b4b8" stroke="#6a6a6a" stroke-width=".6"/>
<path d="M26.4 41.6 L45.4 34.6 L45.4 38 L26.4 45.2 Z" fill="#e6e6e6" stroke="#77777c" stroke-width=".7"/><path d="M27.6 43.8 L44.2 37.6" stroke="#6a6a6a" stroke-width="1.6" stroke-dasharray="1.6 1.4"/>
<ellipse cx="24.4" cy="17.6" rx="13.8" ry="15" transform="rotate(10 24.4 17.6)" fill="#f3f2ff" stroke="#5f5f70" stroke-width="1.3"/>
<path d="M24.4 17.6 L22 3.4 A13.8 15 0 0 1 37.4 13 Z" fill="#c9c9f7" opacity=".9"/><path d="M24.4 17.6 L11 14 A13.8 15 0 0 0 12.4 25 Z" fill="#c9c9f7" opacity=".85"/><path d="M24.4 17.6 L30 31 A13.8 15 0 0 1 16 29.6 Z" fill="#d6d6fa" opacity=".8"/>
<ellipse cx="24.4" cy="17.6" rx="4.4" ry="4.8" fill="#f6eefa"/><ellipse cx="24.4" cy="17.6" rx="2" ry="2.3" fill="#fff" stroke="#5c5470" stroke-width="1.5"/></svg><span class="it" style="left:664px;top:274px;letter-spacing:-0.28px">Jednotka DVD-RAM (E:)</span>
<svg class="abs" style="left:15px;top:328px" width="50" height="28" viewBox="0 0 50 28"><ellipse cx="25" cy="22.6" rx="22" ry="4.5" fill="rgba(0,0,0,.05)"/>
<path d="M1.4 11.6 Q1.2 9.4 3.6 8.4 L21 1.8 Q23.4 1 25.8 1.8 L45.4 8.6 Q48.6 9.8 48.6 12.6 L48.2 16 Q48 18.4 45.6 19.4 L26.4 26.2 Q24.4 27 22.4 26 L3.4 17.4 Q1.6 16.6 1.6 14.8 Z" fill="#9a9a9a" stroke="#77777a" stroke-width=".7"/>
<path d="M2 10.4 Q2.4 9 4 8.4 L21 1.9 Q23.4 1.1 25.8 1.9 L45.4 8.7 Q47.4 9.4 48 10.8 L26.4 18.6 Q24.4 19.2 22.6 18.4 Z" fill="url(#hdtop)"/>
<path d="M1.6 11 L22.6 18.6 Q24 19.2 25 18.9 L25 26.6 Q23.6 26.6 22.4 26 L3.4 17.4 Q1.6 16.6 1.6 14.8 Z" fill="url(#hdl)"/>
<path d="M27.4 19.4 L45 13.2 Q46.6 12.8 46.6 14.4 L46.4 15.6 Q46.2 17.4 44.6 18 L28.6 23.8 Q26.8 24.2 26.8 22.6 Z" fill="#3c3c3c" stroke="#2a2a2a" stroke-width=".6"/>
<path d="M4 14 L22.6 22" stroke="#e9e9e9" stroke-width="1"/></svg><span class="it" style="left:68px;top:335px;letter-spacing:-0.07px">Sony_16GR (H:)</span>
<span class="sh" style="top:390px;letter-spacing:0.0px">Jiný</span><div class="hl" style="top:407px"></div>
<svg class="abs" style="left:20px;top:424px" width="44" height="52" viewBox="0 0 44 52">
<path d="M5.6 2 L41 2.6 L41 5.4 L30 6 L5.6 5.4 Z" fill="#e9e9e9" stroke="#c9c9c9" stroke-width=".6"/>
<path d="M30 5.4 L41.2 4.6 L41.2 42.6 L30 48.6 Z" fill="url(#cabside)"/>
<rect x="5.6" y="5.2" width="24.6" height="42" fill="#d2d6de"/>
<path d="M6.4 6.4 H28 Q29.6 6.4 29.6 8 V24 H6.4 Z" fill="url(#drw)"/>
<rect x="9.6" y="12.6" width="13.4" height="3.4" rx="1.4" fill="#a9c5ea"/>
<path d="M4.6 19.6 Q4.6 17.6 6.6 17.6 L12.6 17.6 Q14 17.6 14.6 19 L15.6 21.2 L24.6 23.4 Q28 24.4 28.4 28 L28.8 34.4 L5 31 Z" fill="url(#yfold)"/>
<path d="M27 30 L29.6 31.6 L28.6 35.6 L26 34.4 Z" fill="#3a2c1c"/>
<path d="M2 28.2 L27 32.6 L24.8 50.4 Q18 49.6 3.4 44.8 Q2 44.2 2 42.8 Z" fill="url(#drw)"/>
<path d="M6 36.2 L18 39 L17.6 42.6 L6 39.6 Z" fill="#a9c5ea" opacity=".85"/>
</svg><span class="it" style="left:68px;top:443px;letter-spacing:-0.36px">Nokia Phone Browser</span>
</div>
  <div id="task">
    <div id="start">
      <svg class="abs" style="left:10px;top:5px" width="25" height="24" viewBox="0 0 25 24">
        <path d="M4.4 2.8 Q8.2 .6 12 3.2 L10.2 10.8 Q6.6 8.4 2.4 10.4 Z" fill="#e8602c"/>
        <path d="M13.4 3.8 Q17.2 6 21.8 3.8 L20 11.4 Q15.6 13.4 11.6 11.2 Z" fill="#7cc62e"/>
        <path d="M2 11.8 Q6 9.6 9.8 12.2 L8 19.6 Q4.2 17.2 0 19.4 Z" fill="#4f86e6"/>
        <path d="M11.2 12.8 Q15.2 15 19.6 12.8 L17.8 20.4 Q13.4 22.4 9.4 20.2 Z" fill="#f2c81a"/>
      </svg>
      <span class="t">Start</span>
    </div>
    <svg class="grip" style="left:124px" width="7" height="24" viewBox="0 0 7 24"><rect x="0" y="0" width="2" height="2" fill="#0f35a8"/><rect x="2" y="2" width="1.2" height="1.2" fill="#5b93f2" opacity=".8"/><rect x="3" y="3" width="2" height="2" fill="#0f35a8"/><rect x="5" y="5" width="1.2" height="1.2" fill="#5b93f2" opacity=".8"/><rect x="0" y="6" width="2" height="2" fill="#0f35a8"/><rect x="2" y="8" width="1.2" height="1.2" fill="#5b93f2" opacity=".8"/><rect x="3" y="9" width="2" height="2" fill="#0f35a8"/><rect x="5" y="11" width="1.2" height="1.2" fill="#5b93f2" opacity=".8"/><rect x="0" y="12" width="2" height="2" fill="#0f35a8"/><rect x="2" y="14" width="1.2" height="1.2" fill="#5b93f2" opacity=".8"/><rect x="3" y="15" width="2" height="2" fill="#0f35a8"/><rect x="5" y="17" width="1.2" height="1.2" fill="#5b93f2" opacity=".8"/><rect x="0" y="18" width="2" height="2" fill="#0f35a8"/><rect x="2" y="20" width="1.2" height="1.2" fill="#5b93f2" opacity=".8"/><rect x="3" y="21" width="2" height="2" fill="#0f35a8"/><rect x="5" y="23" width="1.2" height="1.2" fill="#5b93f2" opacity=".8"/></svg>
    <!-- quick launch -->
    <svg class="ql" style="left:137px" width="20" height="20" viewBox="0 0 20 20"><rect x=".6" y="1.6" width="18.6" height="17.6" fill="#f6f8fd"/><path d="M3 5 H6.2 L7.4 12 L9 5 H11.2 L12.8 12 L14 5 H17 L14.6 16 H11.4 L10 9.6 L8.6 16 H5.4 Z" fill="#1f5fc4"/></svg>
    <svg class="ql" style="left:164px" width="20" height="20" viewBox="0 0 20 20"><path d="M2 6 Q2 3 5 3 L13 1.6 Q16 1.6 16 4.4 L16.4 14 Q16.4 17 13.4 17.4 L6 19 Q2.4 19 2.4 16 Z" fill="#e6f0fb" stroke="#1e56b0" stroke-width="1.4"/><path d="M7 6 H13 V9 H10 V13 H13 V15.4 H7 Z" fill="#2f74d0"/><path d="M6 10.4 H12" stroke="#111" stroke-width="1.6"/><path d="M15 7 L18.8 8 L15.6 9.6 Z" fill="#d03030"/></svg>
    <svg class="ql" style="left:190px" width="21" height="21" viewBox="0 0 21 21"><circle cx="10.5" cy="10.5" r="9.6" fill="#e8eef8"/><path d="M10.5 .9 A9.6 9.6 0 0 1 20.1 10.5 L15 10.5 A4.5 4.5 0 0 0 10.5 6 Z" fill="#3fa848"/><path d="M.9 10.5 A9.6 9.6 0 0 1 10.5 .9 L10.5 6 A4.5 4.5 0 0 0 6 10.5 Z" fill="#e8702a"/><path d="M20.1 10.5 A9.6 9.6 0 0 1 10.5 20.1 L10.5 15 A4.5 4.5 0 0 0 15 10.5 Z" fill="#8fb4e8"/><path d="M10.5 20.1 A9.6 9.6 0 0 1 .9 10.5 L6 10.5 A4.5 4.5 0 0 0 10.5 15 Z" fill="#c8d4ec"/><circle cx="10.5" cy="10.5" r="5.6" fill="#f4f8ff"/><path d="M8 6.6 L15 10.5 L8 14.4 Z" fill="#1c3fa8"/></svg>
    <svg class="ql" style="left:218px" width="18" height="21" viewBox="0 0 18 21"><rect x=".6" y=".4" width="16.8" height="20" fill="#1f37b4"/><rect x="4.4" y="1.6" width="8" height="5.4" fill="#d8dce8"/><rect x="9.4" y="2.2" width="2.2" height="4" fill="#1f37b4"/><rect x="1.8" y="9.6" width="14.4" height="10.4" fill="#f4f4f8"/><rect x="1.8" y="11.6" width="14.4" height="2.6" fill="#c83038"/><rect x="1.8" y="16.4" width="14.4" height="2.6" fill="#c83038"/></svg>
    <svg class="ql" style="left:244px;top:11px" width="21" height="18" viewBox="0 0 21 18"><path d="M2.6 8.6 Q8 3.4 14 5.4 Q19 7 18 11 Q16.4 16 9.4 16 Q4 15.4 2.6 8.6 Z" fill="#f0a818"/><path d="M6 9.4 Q10 5.6 14.4 7.4 Q16.6 9 14 12.4 Q10.4 14.6 7.4 12.8 Z" fill="#8a1828"/><path d="M6.6 1.6 L7.4 4.4 M11.6 .6 L11.6 3.6 M1 5.6 L3.4 6.8 M16.4 2.6 L15 5 M20 6.6 L17.6 7.4" stroke="#f4c020" stroke-width="1.4"/></svg>
    <svg class="ql" style="left:273px" width="15" height="21" viewBox="0 0 15 21"><path d="M3 2 L4.4 11 M7 3.4 L7 11 M11.6 2.4 L10 11" stroke="#d8d8e8" stroke-width="1.6"/><circle cx="2.8" cy="2.4" r="1.8" fill="#b85a28"/><path d="M6.4 5 L7.6 5 L7.6 11 L6.4 11 Z" fill="#e8c020"/><path d="M10.6 5.6 L12.2 6 L11 11 L9.6 11 Z" fill="#e03028"/><path d="M3.4 8 L5 8 L5.2 11 L3.8 11 Z" fill="#2f9a38"/><path d="M2.4 9.6 H12.6 L11.4 19.4 Q7.4 20.6 3.6 19.4 Z" fill="#e8e4d8" opacity=".92"/><path d="M4.6 11 H10.4 L9.8 17 H5.2 Z" fill="#e8b048" opacity=".8"/></svg>
    <svg class="ql" style="left:298px" width="22" height="22" viewBox="0 0 22 22"><path d="M1 4 Q1 .8 4.2 .8 H21 V21 H1 Z" fill="#fdf6d8"/><path d="M2.8 5 Q2.8 2.6 5.2 2.6 H18.4 V18 H2.8 Z" fill="#f3b414"/><circle cx="10.8" cy="10.4" r="5.6" fill="#e08a0c" stroke="#c87808" stroke-width=".8"/><ellipse cx="10.8" cy="10.4" rx="2" ry="3.4" fill="#fbe6a8"/></svg>
    <svg class="ql" style="left:325px" width="21" height="21" viewBox="0 0 21 21"><circle cx="10.5" cy="10.5" r="9.8" fill="#0c1018"/><circle cx="10.5" cy="10.5" r="9.4" fill="none" stroke="#4a5a78" stroke-width=".8"/><path d="M6 4.6 L15 16.4 M15 4.6 L6 16.4" stroke="#dfe8f8" stroke-width="2.6" stroke-linecap="round"/><path d="M3 9 Q10.5 6.6 18 9" fill="none" stroke="#8fa8d0" stroke-width=".8"/></svg>
    <svg class="ql" style="left:351px" width="22" height="21" viewBox="0 0 22 21"><circle cx="11.4" cy="11.2" r="7.8" fill="#2f8ae0"/><path d="M7 11.4 H16.4 Q16.4 6.4 11.6 6.4 Q7 6.8 7 11.6 Q7.4 16 11.8 16 Q14.6 16 16 13.6" fill="none" stroke="#dff0ff" stroke-width="2.4"/><path d="M1.6 17.4 Q-.6 12.4 8 6 Q16 1 20.6 3 Q21.8 4.4 19.4 7.4" fill="none" stroke="#f0c030" stroke-width="1.8"/><path d="M1.8 17.6 Q4.4 19.6 9 17.6" fill="none" stroke="#f0c030" stroke-width="1.6"/></svg>
    <svg class="ql" style="left:379px" width="22" height="21" viewBox="0 0 22 21"><rect x=".6" y=".6" width="20.8" height="19.8" fill="#fff"/><path d="M2 2 H7.4 L2 9 Z" fill="#a890d8"/><path d="M2 9.6 L7.6 2.4 L7.6 9.6 Z" fill="#d0c4ee"/><path d="M7.6 2 H12.4 V7.6 Z" fill="#e03030"/><rect x="14.4" y="2" width="5.4" height="10.6" fill="#f0a018"/><path d="M2 11.4 L7 11.4 V19 H2 Z" fill="#2a50c8"/><rect x="8" y="14.6" width="11.8" height="4.4" fill="#2fb038"/></svg>
    <svg class="ql" style="left:407px;top:11px" width="20" height="19" viewBox="0 0 20 19"><rect x=".6" y=".6" width="18.6" height="17.8" fill="#b8302c"/><rect x="2.2" y="2.2" width="15.4" height="14.6" fill="#d8605a"/><path d="M4 14.6 L9 7.6 L12 11 L15.6 4.6 L15.6 14.6 Z" fill="#f0c8c4"/><path d="M5 5 H9 V8 H5 Z" fill="#8a1818"/><path d="M8 13 L15 5" stroke="#8a1818" stroke-width="1.4"/></svg>
    <svg class="ql" style="left:433px" width="21" height="21" viewBox="0 0 21 21"><circle cx="10.6" cy="10.6" r="9.6" fill="#e8681c"/><circle cx="11" cy="9" r="6" fill="#3068c8"/><path d="M2 7 Q5 3.4 9 4.6 Q6.4 6.4 7.6 9 Q9 11 12 10.6 Q11 13.4 8 13.4 Q5 13 4.4 10 Q3 12 4 15 Q7 19 12.6 18 Q18 16.4 18.6 10 Q19.6 15 16 18.4 Q10.6 21.6 5 18.6 Q.4 14.6 2 7 Z" fill="#f08a1c"/><path d="M13 3.6 Q17.4 5 18.4 9.6" fill="none" stroke="#f4c030" stroke-width="1.4"/></svg>
    <svg class="ql" style="left:461px" width="18" height="21" viewBox="0 0 18 21"><path d="M1.4 3 L13 1.4 L15.4 17.4 L3 19.4 Z" fill="#8ccaf0"/><path d="M1.4 3 L13 1.4 L13.4 4 L1.8 5.8 Z" fill="#c8e8fb"/><path d="M3.6 8 L12.6 6.6 L14 16 L5 17.6 Z" fill="#a4d6f6"/><path d="M12 14 L16.4 13 L15.6 17.6 L11 18.6 Z" fill="#d8eefc"/></svg>
    <svg class="grip" style="left:493px" width="7" height="24" viewBox="0 0 7 24"><rect x="0" y="0" width="2" height="2" fill="#0f35a8"/><rect x="2" y="2" width="1.2" height="1.2" fill="#5b93f2" opacity=".8"/><rect x="3" y="3" width="2" height="2" fill="#0f35a8"/><rect x="5" y="5" width="1.2" height="1.2" fill="#5b93f2" opacity=".8"/><rect x="0" y="6" width="2" height="2" fill="#0f35a8"/><rect x="2" y="8" width="1.2" height="1.2" fill="#5b93f2" opacity=".8"/><rect x="3" y="9" width="2" height="2" fill="#0f35a8"/><rect x="5" y="11" width="1.2" height="1.2" fill="#5b93f2" opacity=".8"/><rect x="0" y="12" width="2" height="2" fill="#0f35a8"/><rect x="2" y="14" width="1.2" height="1.2" fill="#5b93f2" opacity=".8"/><rect x="3" y="15" width="2" height="2" fill="#0f35a8"/><rect x="5" y="17" width="1.2" height="1.2" fill="#5b93f2" opacity=".8"/><rect x="0" y="18" width="2" height="2" fill="#0f35a8"/><rect x="2" y="20" width="1.2" height="1.2" fill="#5b93f2" opacity=".8"/><rect x="3" y="21" width="2" height="2" fill="#0f35a8"/><rect x="5" y="23" width="1.2" height="1.2" fill="#5b93f2" opacity=".8"/></svg>
    <div id="tbtn">
      <svg class="abs" style="left:14px;top:5px" width="14" height="20" viewBox="0 0 14 20"><path d="M1.6 2 Q1.6 .8 3 .8 L10.6 .4 Q12 .4 12 1.8 L12.2 11.6 Q12.2 12.8 11 12.9 L3.4 13.6 Q2 13.6 2 12.4 Z" fill="url(#scr2)" stroke="#9cc4f0" stroke-width=".8"/><path d="M4.6 13.6 L9.6 13.2 L10 15.6 L4.8 16 Z" fill="#9aa6d8"/><ellipse cx="7" cy="17" rx="5.4" ry="2" fill="#d8d0ee" stroke="#8d86c2" stroke-width=".7"/></svg>
      <span class="t">Tento počítač</span>
    </div>
    <svg class="grip" style="left:1100px" width="7" height="24" viewBox="0 0 7 24"><rect x="0" y="0" width="2" height="2" fill="#0f35a8"/><rect x="2" y="2" width="1.2" height="1.2" fill="#5b93f2" opacity=".8"/><rect x="3" y="3" width="2" height="2" fill="#0f35a8"/><rect x="5" y="5" width="1.2" height="1.2" fill="#5b93f2" opacity=".8"/><rect x="0" y="6" width="2" height="2" fill="#0f35a8"/><rect x="2" y="8" width="1.2" height="1.2" fill="#5b93f2" opacity=".8"/><rect x="3" y="9" width="2" height="2" fill="#0f35a8"/><rect x="5" y="11" width="1.2" height="1.2" fill="#5b93f2" opacity=".8"/><rect x="0" y="12" width="2" height="2" fill="#0f35a8"/><rect x="2" y="14" width="1.2" height="1.2" fill="#5b93f2" opacity=".8"/><rect x="3" y="15" width="2" height="2" fill="#0f35a8"/><rect x="5" y="17" width="1.2" height="1.2" fill="#5b93f2" opacity=".8"/><rect x="0" y="18" width="2" height="2" fill="#0f35a8"/><rect x="2" y="20" width="1.2" height="1.2" fill="#5b93f2" opacity=".8"/><rect x="3" y="21" width="2" height="2" fill="#0f35a8"/><rect x="5" y="23" width="1.2" height="1.2" fill="#5b93f2" opacity=".8"/></svg>
    <div class="abs" style="left:1108px;top:9px;width:30px;height:24px;background:rgba(40,90,200,.55)"></div>
    <span class="w" style="left:1113px;top:15px;font-size:13px;letter-spacing:-.7px">CS</span>
    <div id="tray">
      <svg class="abs" style="left:-10px;top:8px" width="20" height="20" viewBox="0 0 20 20"><defs><linearGradient id="chg" x1="0" y1="0" x2="1" y2="1"><stop offset="0" stop-color="#8fdcff"/><stop offset=".45" stop-color="#2f9cf4"/><stop offset="1" stop-color="#1765e0"/></linearGradient><linearGradient id="chb" x1="0" y1="0" x2="1" y2="0"><stop offset="0" stop-color="#12399a"/><stop offset=".5" stop-color="#3a7ee0"/><stop offset="1" stop-color="#bfe4ff"/></linearGradient></defs><circle cx="10" cy="10" r="8.6" fill="url(#chg)" stroke="url(#chb)" stroke-width="1.2"/><path d="M12 5.8 L7.6 10 L12 14.2" fill="none" stroke="#fff" stroke-width="2.3"/></svg>
      <svg class="abs" style="left:9px;top:5px" width="20" height="22" viewBox="0 0 20 22"><path d="M8 6 L15.6 3 L18.6 6 L14.6 19 L7 21 L5.4 17 Z" fill="#cfcfc8" stroke="#8a8a84" stroke-width=".8"/><path d="M10 9 L15.6 7 L14 12 L9 14 Z" fill="#eeeee6"/><circle cx="10.6" cy="17" r="1.8" fill="#fff" stroke="#77776f" stroke-width=".8"/><circle cx="6" cy="6.4" r="4.8" fill="#e01c24" stroke="#fff" stroke-width=".6"/><path d="M3.8 4.2 L8.2 8.6 M8.2 4.2 L3.8 8.6" stroke="#fff" stroke-width="1.6"/></svg>
      <svg class="abs" style="left:32px;top:6px" width="18" height="21" viewBox="0 0 18 21"><path d="M6.4 1 H16.4 V10.4 H6.4 Z" fill="#3a3a88" stroke="#8aa4e0" stroke-width="1.2"/><path d="M9 11 H14 V13 H9 Z" fill="#c8d0e8"/><path d="M1 6 H11 V15 H1 Z" fill="#3c3c90" stroke="#9ab0e8" stroke-width="1.2"/><path d="M3.6 15.6 H8.6 V17.4 H3.6 Z M2 17.4 H10.4 V19.6 H2 Z" fill="#d0d8f0"/></svg>
      <svg class="abs" style="left:54px;top:6px" width="21" height="21" viewBox="0 0 21 21"><defs><radialGradient id="org" cx=".4" cy=".35" r=".75"><stop offset="0" stop-color="#ffd070"/><stop offset=".6" stop-color="#f8a820"/><stop offset="1" stop-color="#e88c10"/></radialGradient></defs><circle cx="10.5" cy="10.5" r="9" fill="url(#org)"/><path d="M10.5 4 L15.6 9.6 H12.6 V15.6 H8.4 V9.6 H5.4 Z" fill="#fff8e0"/></svg>
      <span class="w" style="left:84px;top:10px">21:10</span>
    </div>
  </div>
</div>
<div id="rstrip"></div>
<div id="bstrip"></div>
</body>
</html>
